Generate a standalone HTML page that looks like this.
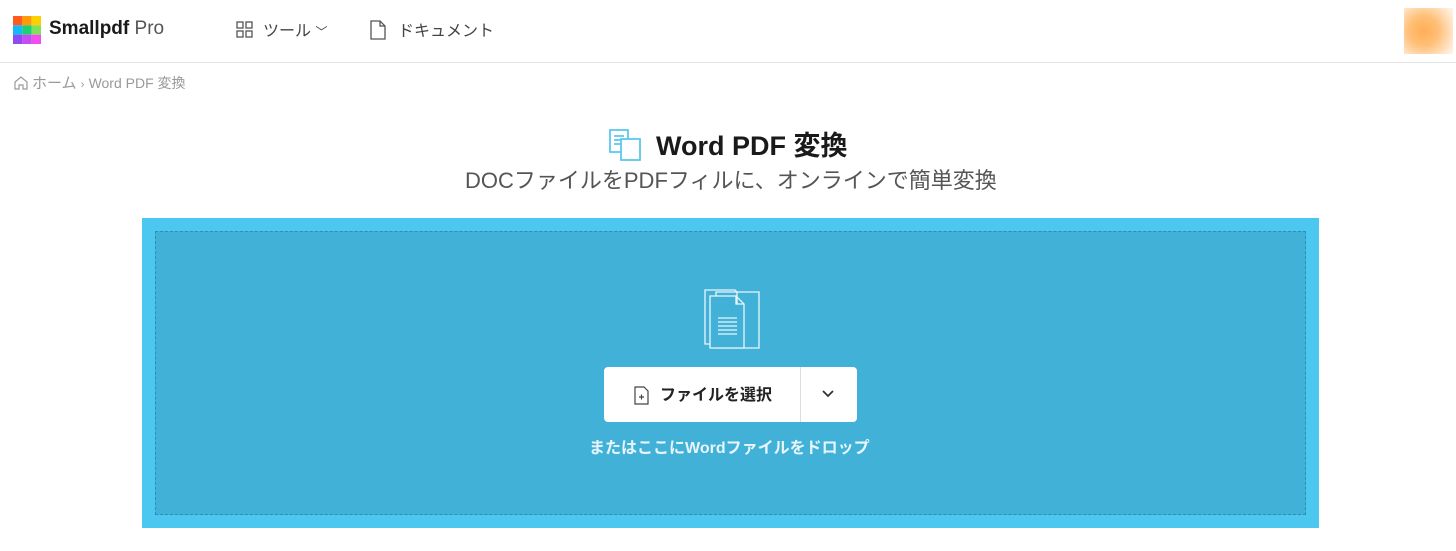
<!DOCTYPE html>
<html><head><meta charset="utf-8"><style>
*{margin:0;padding:0;box-sizing:border-box}
body{width:1456px;height:551px;background:#fff;font-family:"Liberation Sans","Noto Sans CJK JP",sans-serif;position:relative;overflow:hidden;color:#222}
.hdr{position:absolute;left:0;top:0;width:1456px;height:63px;border-bottom:1px solid #e4e4e4}
.abs{position:absolute;white-space:nowrap}
</style></head><body>
<div class="hdr"></div>
<svg class="abs" style="left:13px;top:16px" width="28" height="28" viewBox="0 0 27 27">
<rect x="0" y="0" width="9" height="9" fill="#ff5a1f"/><rect x="9" y="0" width="9" height="9" fill="#ff9b0a"/><rect x="18" y="0" width="9" height="9" fill="#ffd000"/>
<rect x="0" y="9" width="9" height="9" fill="#14b9f5"/><rect x="9" y="9" width="9" height="9" fill="#1ecf74"/><rect x="18" y="9" width="9" height="9" fill="#84e05a"/>
<rect x="0" y="18" width="9" height="9" fill="#8c4cf2"/><rect x="9" y="18" width="9" height="9" fill="#c64cf5"/><rect x="18" y="18" width="9" height="9" fill="#f14ef0"/></svg>
<div class="abs" style="left:49px;top:18px;font-size:19px;font-weight:bold;color:#1a1a1a">Smallpdf <span style="font-weight:normal;color:#555">Pro</span></div>
<svg class="abs" style="left:236px;top:21px" width="18" height="18" viewBox="0 0 18 18" fill="none" stroke="#555" stroke-width="1.3"><rect x="1" y="1" width="6" height="6"/><rect x="10" y="1" width="6" height="6"/><rect x="1" y="10" width="6" height="6"/><rect x="10" y="10" width="6" height="6"/></svg>
<div class="abs" style="left:263px;top:17px;font-size:16px;color:#444">ツール <span style="font-size:12px">﹀</span></div>
<svg class="abs" style="left:370px;top:20px" width="16" height="20" viewBox="0 0 16 20" fill="none" stroke="#555" stroke-width="1.3"><path d="M1 1h9l5 5v13H1z M10 1v5h5"/></svg>
<div class="abs" style="left:398px;top:17px;font-size:16px;color:#444">ドキュメント</div>
<div class="abs" style="left:1404px;top:8px;width:49px;height:46px;background:radial-gradient(circle at 40% 50%,#ffae55 0%,#ffc078 40%,#ffe6cc 80%,#fff5ee 100%)"></div>
<svg class="abs" style="left:13px;top:75px" width="16" height="16" viewBox="0 0 16 16" fill="none" stroke="#999" stroke-width="1.2"><path d="M2 7L8 2l6 5v7H10v-4H6v4H2z"/></svg>
<div class="abs" style="left:32px;top:72px;font-size:15px;color:#999">ホーム <span style="font-size:11px">›</span> <span style="font-size:14px">Word PDF 変換</span></div>
<svg class="abs" style="left:609px;top:129px" width="33" height="32" viewBox="0 0 33 32" fill="none" stroke="#5bc8ef" stroke-width="1.8"><rect x="1" y="1" width="18" height="22" fill="#fff"/><path d="M5 7h10M5 11h10M5 15h10"/><rect x="12" y="10" width="19" height="21" fill="#fff"/></svg>
<div class="abs" style="left:656px;top:124px;font-size:27px;font-weight:bold;color:#1a1a1a">Word PDF 変換</div>
<div class="abs" style="left:465px;top:163px;font-size:22px;color:#555">DOCファイルをPDFフィルに、オンラインで簡単変換</div>
<div class="abs" style="left:142px;top:218px;width:1177px;height:310px;background:#4cc7ef"></div>
<div class="abs" style="left:155px;top:231px;width:1151px;height:284px;background:#42b1d8;border:1px dashed #2e8fb4"></div>
<svg class="abs" style="left:702px;top:286px" width="60" height="64" viewBox="0 0 60 64" fill="none" stroke="#e8f6fc" stroke-width="1.3"><path d="M3 4h30l2 2v52H3z"/><path d="M14 6h36l7 0v56H14z"/><path d="M8 10h26l8 8v44H8z M34 10v8h8" fill="#42b1d8"/><path d="M16 32h19M16 36h19M16 40h19M16 44h19M16 48h19"/></svg>
<div class="abs" style="left:604px;top:367px;width:253px;height:55px;background:#fff;border-radius:4px"></div>
<div class="abs" style="left:800px;top:367px;width:1px;height:55px;background:#ddd"></div>
<svg class="abs" style="left:633px;top:384px" width="18" height="22" viewBox="0 0 18 22" fill="none" stroke="#444" stroke-width="1.2"><path d="M2 3h9l4 4v13H2z"/><path d="M6 13h5M8.5 10.5v5"/></svg>
<div class="abs" style="left:660px;top:381px;font-size:16px;font-weight:bold;color:#222">ファイルを選択</div>
<svg class="abs" style="left:821px;top:389px" width="14" height="10" viewBox="0 0 14 10" fill="none" stroke="#333" stroke-width="1.8"><path d="M2 2l5 5 5-5"/></svg>
<div class="abs" style="left:589px;top:434px;font-size:16px;font-weight:bold;color:#e8f6fc">またはここにWordファイルをドロップ</div>
</body></html>
